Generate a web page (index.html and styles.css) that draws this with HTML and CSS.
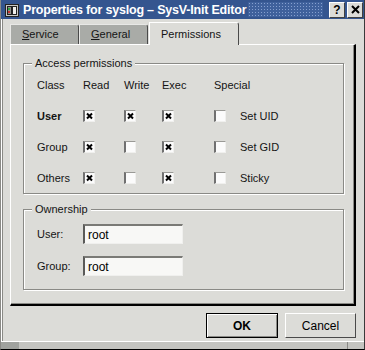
FILE: index.html
```html
<!DOCTYPE html>
<html lang="en">
<head>
    <meta charset="UTF-8">
    <meta name="viewport" content="width=device-width, initial-scale=1.0">
    <title>Properties for syslog</title>
    <link rel="stylesheet" href="styles.css">
</head>
<body>
    <div class="window">
        <div class="titlebar">
            <span class="app-icon">
                <svg width="16" height="16" viewBox="0 0 16 16">
                    <rect x="1.5" y="2.5" width="13" height="12" fill="#c8c8c4" stroke="#222"/>
                    <rect x="3.5" y="4.5" width="4" height="8" fill="#8e8e8a" stroke="#222"/>
                    <rect x="8.5" y="4.5" width="4" height="8" fill="#f0f0ec" stroke="#222"/>
                    <rect x="4" y="6" width="2" height="2" fill="#2ea040"/>
                    <rect x="4" y="9" width="2" height="2" fill="#c83030"/>
                </svg>
            </span>
            <span class="title">Properties for syslog – SysV-Init Editor</span>
            <span class="dots"></span>
            <span class="tb-btn">?</span>
            <span class="tb-btn">
                <svg width="9" height="9" viewBox="0 0 9 9">
                    <path d="M1 1 L8 8 M8 1 L1 8" stroke="#000" stroke-width="2"/>
                </svg>
            </span>
        </div>

        <div class="tabs">
            <div class="tab"><u>S</u>ervice</div>
            <div class="tab"><u>G</u>eneral</div>
            <div class="tab active">Permissions</div>
        </div>

        <div class="panel">
            <div class="group perms">
                <span class="legend">Access permissions</span>
                <div class="grid">
                    <span>Class</span><span>Read</span><span>Write</span><span>Exec</span><span>Special</span><span></span>

                    <span class="bold">User</span>
                    <span class="check on"></span><span class="check on"></span><span class="check on"></span>
                    <span class="check"></span><span>Set UID</span>

                    <span>Group</span>
                    <span class="check on"></span><span class="check"></span><span class="check on"></span>
                    <span class="check"></span><span>Set GID</span>

                    <span>Others</span>
                    <span class="check on"></span><span class="check"></span><span class="check on"></span>
                    <span class="check"></span><span>Sticky</span>
                </div>
            </div>

            <div class="group owner">
                <span class="legend">Ownership</span>
                <div class="field">
                    <label>User:</label>
                    <input type="text" value="root">
                </div>
                <div class="field">
                    <label>Group:</label>
                    <input type="text" value="root">
                </div>
            </div>
        </div>

        <div class="actions">
            <button class="btn default">OK</button>
            <button class="btn">Cancel</button>
        </div>

        <div class="statusbar">
            <span class="grip-left"></span>
            <span class="grip-fill"></span>
            <span class="grip-right"></span>
        </div>
    </div>
</body>
</html>
```

FILE: styles.css
```css
body {
    margin: 0;
    width: 365px;
    height: 350px;
    overflow: hidden;
    background-color: #dcdcd8;
    font-family: "Liberation Sans", Arial, sans-serif;
    font-size: 11px;
    color: #141414;
}
.window {
    height: 350px;
    box-sizing: border-box;
    display: flex;
    flex-direction: column;
    border-left: 1px solid #8a8a86;
    border-right: 1px solid #3a3a3a;
    border-bottom: 1px solid #000;
    box-shadow: inset 1px 0 0 #ffffff, inset 2px 0 0 #8a8a86;
}
.titlebar {
    height: 19px;
    display: flex;
    align-items: center;
    background-color: #34558f;
    color: #fff;
    padding-right: 1px;
}
.app-icon {
    width: 16px;
    height: 16px;
    margin: 0 3px 0 3px;
}
.title {
    font-size: 12.5px;
    font-weight: bold;
    letter-spacing: -0.2px;
    white-space: nowrap;
    padding-right: 2px;
}
.dots {
    flex: 1;
    align-self: stretch;
    margin: 2px 4px 2px 0;
    background-color: #3f619c;
    background-image: radial-gradient(circle, #86a0cf 0.7px, transparent 1px);
    background-size: 3px 3px;
}
.tb-btn {
    width: 14px;
    height: 14px;
    margin-left: 2px;
    display: flex;
    align-items: center;
    justify-content: center;
    background-color: #dcdcd8;
    color: #000;
    font-weight: bold;
    font-size: 12px;
    border-top: 1px solid #fff;
    border-left: 1px solid #fff;
    border-right: 1px solid #404040;
    border-bottom: 1px solid #404040;
}
.tabs {
    display: flex;
    align-items: flex-end;
    height: 24px;
    padding-left: 9px;
    margin-top: 1px;
}
.tab {
    width: 56px;
    height: 19px;
    line-height: 19px;
    padding-left: 11px;
    background-color: #a9aba7;
    border-top: 1px solid #e8e8e6;
    border-left: 1px solid #e8e8e6;
    border-right: 1px solid #4a4a4a;
    border-top-right-radius: 3px;
}
.tab.active {
    width: 77px;
    height: 22px;
    line-height: 22px;
    margin-left: 1px;
    margin-bottom: -1px;
    background-color: #dcdcd8;
    border-top: 1px solid #fff;
    border-left: 1px solid #fff;
    position: relative;
}
.panel {
    margin: 0 8px 0 9px;
    height: 262px;
    box-sizing: border-box;
    border-top: 1px solid #fff;
    border-left: 1px solid #fff;
    border-right: 2px solid #000;
    border-bottom: 2px solid #000;
    box-shadow: inset -1px -1px 0 #8a8a86;
    padding: 18px 10px 0 12px;
}
.group {
    position: relative;
    border: 1px solid #8a8a86;
    box-shadow: 1px 1px 0 #fff, inset 1px 1px 0 #fff;
    padding-left: 13px;
}
.legend {
    position: absolute;
    top: -7px;
    left: 8px;
    padding: 0 3px;
    background-color: #dcdcd8;
    line-height: 13px;
}
.perms {
    height: 131px;
    box-sizing: border-box;
    padding-top: 6px;
}
.grid {
    display: grid;
    grid-template-columns: 46px 41px 38px 52px 26px auto;
    grid-template-rows: 30px 31px 31px 31px;
    align-items: center;
    white-space: nowrap;
}
.bold {
    font-weight: bold;
}
.check {
    width: 12px;
    height: 12px;
    box-sizing: border-box;
    background-color: #fbfbfb;
    border-top: 1px solid #9a9a96;
    border-left: 2px solid #707070;
    border-right: 1px solid #f0f0ee;
    border-bottom: 1px solid #f0f0ee;
}
.check.on {
    background-image: url("data:image/svg+xml;utf8,<svg xmlns='http://www.w3.org/2000/svg' width='9' height='10'><path d='M2 2.5 L7 7.5 M7 2.5 L2 7.5' stroke='black' stroke-width='2'/></svg>");
    background-repeat: no-repeat;
}
.owner {
    margin-top: 15px;
    height: 81px;
    box-sizing: border-box;
    padding-top: 14px;
}
.field {
    display: flex;
    align-items: center;
    margin-bottom: 12px;
}
.field label {
    width: 46px;
}
.field input {
    width: 100px;
    height: 20px;
    box-sizing: border-box;
    margin: 0;
    padding: 0 0 0 3px;
    font-family: "Liberation Sans", Arial, sans-serif;
    font-size: 12px;
    color: #000;
    background-color: #f8f8f6;
    border-top: 2px solid #7a7a76;
    border-left: 2px solid #5a5a58;
    border-right: 1px solid #f0f0ee;
    border-bottom: 1px solid #f0f0ee;
    outline: none;
}
.actions {
    display: flex;
    justify-content: flex-end;
    gap: 7px;
    padding: 7px 8px 0 0;
}
.btn {
    height: 25px;
    box-sizing: border-box;
    font-family: "Liberation Sans", Arial, sans-serif;
    font-size: 12px;
    color: #000;
    background-color: #dcdcd8;
    border-top: 1px solid #fff;
    border-left: 1px solid #fff;
    border-right: 1px solid #4a4a4a;
    border-bottom: 1px solid #4a4a4a;
    width: 71px;
    padding: 0;
}
.btn.default {
    width: 72px;
    font-weight: bold;
    border: 1px solid #000;
    box-shadow: inset 1px 1px 0 #fff, inset -1px -1px 0 #8a8a86;
}
.statusbar {
    margin-top: auto;
    height: 7px;
    display: flex;
    border-top: 1px solid #fff;
    background-color: #c4c4c0;
}
.grip-left {
    width: 18px;
    background-color: #a0a29e;
}
.grip-fill {
    flex: 1;
}
.grip-right {
    width: 16px;
    border-left: 1px solid #8a8a86;
}
```
